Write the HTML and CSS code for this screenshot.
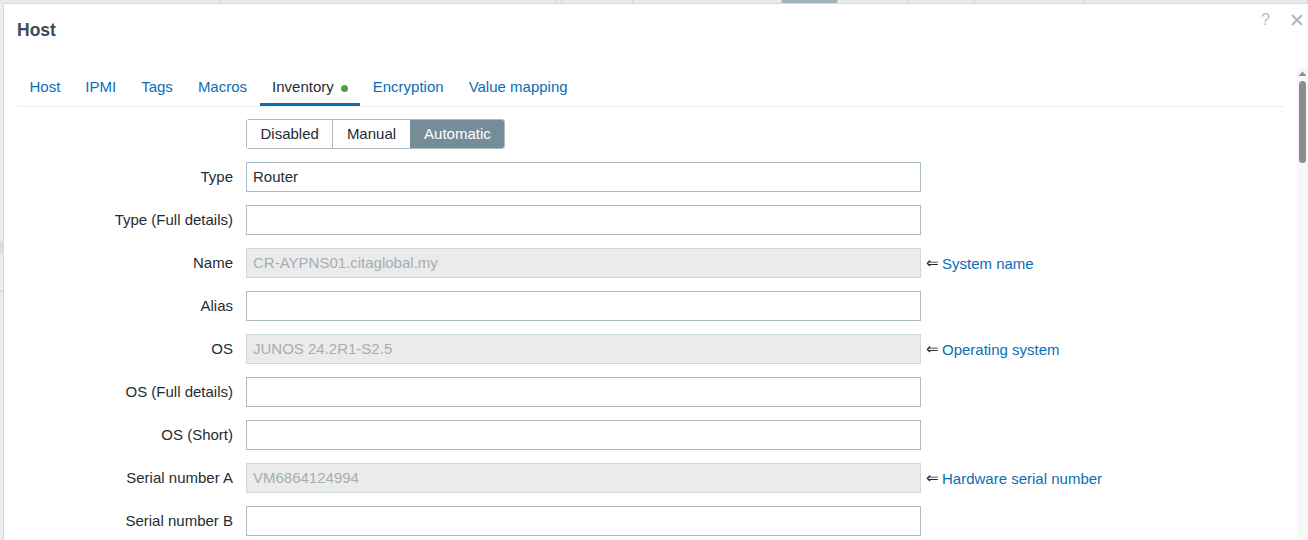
FILE: index.html
```html
<!DOCTYPE html>
<html lang="en">
<head>
<meta charset="utf-8">
<title>Host</title>
<link rel="stylesheet" href="styles.css">
</head>
<body>
<div class="page">
  <div class="bg-head">
    <div class="bg-cell"></div>
    <div class="bg-cell"></div>
    <div class="bg-cell"></div>
    <div class="bg-cell"></div>
    <div class="bg-cell"></div>
    <div class="bg-cell bg-cell-dark"></div>
    <div class="bg-cell"></div>
    <div class="bg-cell"></div>
    <div class="bg-cell"></div>
    <div class="bg-cell"></div>
  </div>
  <div class="bg-side">
    <div class="side-a"></div>
    <div class="side-dark"></div>
    <div class="side-b"></div>
    <div class="side-line"></div>
  </div>
</div>

<div class="dialog">
  <div class="dialog-head">
    <h4 class="dialog-title">Host</h4>
    <div class="dialog-actions">
      <span class="btn-help">?</span>
      <svg class="btn-close" width="12" height="12" viewBox="0 0 12 12"><path d="M1 1 L11 11 M11 1 L1 11" stroke="#a9b8c1" stroke-width="2" fill="none"/></svg>
    </div>
  </div>
  <div class="dialog-body">
    <div class="content">
      <ul class="tabs">
        <li class="tab"><a>Host</a></li>
        <li class="tab"><a>IPMI</a></li>
        <li class="tab"><a>Tags</a></li>
        <li class="tab"><a>Macros</a></li>
        <li class="tab tab-active"><a>Inventory</a><span class="dot"></span></li>
        <li class="tab"><a>Encryption</a></li>
        <li class="tab"><a>Value mapping</a></li>
      </ul>
      <div class="form">
        <div class="label"></div>
        <div class="field">
          <div class="segmented">
            <span class="seg">Disabled</span>
            <span class="seg">Manual</span>
            <span class="seg seg-on">Automatic</span>
          </div>
        </div>
        <div class="hint"></div>

        <div class="label">Type</div>
        <div class="field"><div class="input">Router</div></div>
        <div class="hint"></div>

        <div class="label">Type (Full details)</div>
        <div class="field"><div class="input"></div></div>
        <div class="hint"></div>

        <div class="label">Name</div>
        <div class="field"><div class="input input-ro">CR-AYPNS01.citaglobal.my</div></div>
        <div class="hint"><span class="arrow">⇐</span> <a class="link">System name</a></div>

        <div class="label">Alias</div>
        <div class="field"><div class="input"></div></div>
        <div class="hint"></div>

        <div class="label">OS</div>
        <div class="field"><div class="input input-ro">JUNOS 24.2R1-S2.5</div></div>
        <div class="hint"><span class="arrow">⇐</span> <a class="link">Operating system</a></div>

        <div class="label">OS (Full details)</div>
        <div class="field"><div class="input"></div></div>
        <div class="hint"></div>

        <div class="label">OS (Short)</div>
        <div class="field"><div class="input"></div></div>
        <div class="hint"></div>

        <div class="label">Serial number A</div>
        <div class="field"><div class="input input-ro">VM6864124994</div></div>
        <div class="hint"><span class="arrow">⇐</span> <a class="link">Hardware serial number</a></div>

        <div class="label">Serial number B</div>
        <div class="field"><div class="input"></div></div>
        <div class="hint"></div>
      </div>
    </div>
    <div class="scrollbar">
      <svg class="sb-arrow" width="11" height="5" viewBox="0 0 11 5"><path d="M1.5 5 L5.5 0.5 L9.5 5 Z" fill="#8f8f8f"/></svg>
      <div class="sb-thumb"></div>
    </div>
  </div>
</div>
</body>
</html>
```

FILE: styles.css
```css
html, body {
  margin: 0;
  padding: 0;
}
body {
  width: 1308px;
  height: 540px;
  overflow: hidden;
  background: #e9edf0;
  font-family: "Liberation Sans", Arial, sans-serif;
  font-size: 15px;
  color: #1f2c33;
  position: relative;
}

/* background page */
.page {
  display: flex;
  flex-direction: column;
}
.bg-head {
  height: 3px;
  display: grid;
  grid-template-columns: 221px 336px 5px 71px 149px 56px 71px 66px 110px 1fr;
  background: #e6eaed;
}
.bg-cell {
  border-right: 1px solid #cdd6db;
}
.bg-cell-dark {
  background: #a3b3bb;
}
.bg-side {
  width: 3px;
  display: flex;
  flex-direction: column;
}
.side-a { height: 238px; }
.side-dark { height: 12px; background: #d7dee2; }
.side-b { height: 37px; }
.side-line { height: 2px; background: #d7dee2; }

/* dialog overlay */
.dialog {
  position: absolute;
  left: 3px;
  top: 3px;
  width: 1305px;
  height: 560px;
  box-sizing: border-box;
  background: #fff;
  border-left: 1px solid #d3dadd;
  border-top: 1px solid #d3dadd;
  display: flex;
  flex-direction: column;
}
.dialog-head {
  height: 63px;
  box-sizing: border-box;
  padding: 15px 0 0 13px;
  display: flex;
  justify-content: space-between;
  align-items: flex-start;
}
.dialog-title {
  margin: 0;
  font-size: 17.5px;
  line-height: 22px;
  font-weight: bold;
  color: #3b4b59;
}
.dialog-actions {
  display: flex;
  align-items: center;
  gap: 21px;
  margin-top: -7px;
  padding-right: 5px;
}
.btn-help {
  font-size: 16px;
  line-height: 16px;
  color: #aebcc4;
}
.btn-close {
  display: block;
}

.dialog-body {
  flex: 1;
  display: flex;
}
.content {
  flex: 1;
  padding: 0 13px;
}
.scrollbar {
  width: 11px;
  background: #f8f8f8;
  display: flex;
  flex-direction: column;
  padding-top: 4px;
}
.sb-arrow {
  display: block;
}
.sb-thumb {
  margin: 5px 2px 0 2px;
  width: 7px;
  height: 82px;
  border-radius: 4px;
  background: #8c8c8c;
}

/* tabs */
.tabs {
  list-style: none;
  margin: 0;
  padding: 0;
  display: flex;
  border-bottom: 1px solid #ebeef0;
}
.tab {
  display: flex;
  align-items: center;
  padding: 11px 12.5px 7px;
  line-height: 18px;
  border-bottom: 3px solid transparent;
}
.tab a {
  color: #0a6eb4;
}
.tab-active {
  border-bottom-color: #0a6eb4;
}
.tab-active a {
  color: #1f2c33;
}
.dot {
  width: 7px;
  height: 7px;
  border-radius: 50%;
  background: #4aa148;
  margin-left: 7px;
  margin-top: 2px;
}

/* form */
.form {
  margin-top: 12px;
  display: grid;
  grid-template-columns: 229px 675px 1fr;
  grid-auto-rows: 30px;
  row-gap: 13px;
}
.label {
  padding-right: 13px;
  padding-bottom: 2px;
  text-align: right;
  display: flex;
  align-items: center;
  justify-content: flex-end;
}
.field {
  display: flex;
  align-items: stretch;
}
.hint {
  padding-left: 5px;
  display: flex;
  align-items: center;
  white-space: nowrap;
}
.arrow {
  color: #1f2c33;
}
.link {
  color: #0a6eb4;
  margin-left: 3px;
}
.input {
  flex: 1;
  box-sizing: border-box;
  height: 30px;
  border: 1px solid #acbbc2;
  padding: 0 6px 2px;
  display: flex;
  align-items: center;
  color: #1f2c33;
  background: #fff;
}
.input-ro {
  background: #ebebeb;
  border-color: #d0d7db;
  color: #a4aeb4;
}

.segmented {
  display: flex;
  border: 1px solid #acbbc2;
  border-radius: 3px;
  overflow: hidden;
}
.seg {
  padding: 0 13.5px 2px;
  display: flex;
  align-items: center;
  color: #1f2c33;
  background: #fff;
}
.seg + .seg {
  border-left: 1px solid #acbbc2;
}
.seg-on {
  background: #768d99;
  border-left-color: #768d99 !important;
  color: #fff;
}
```
